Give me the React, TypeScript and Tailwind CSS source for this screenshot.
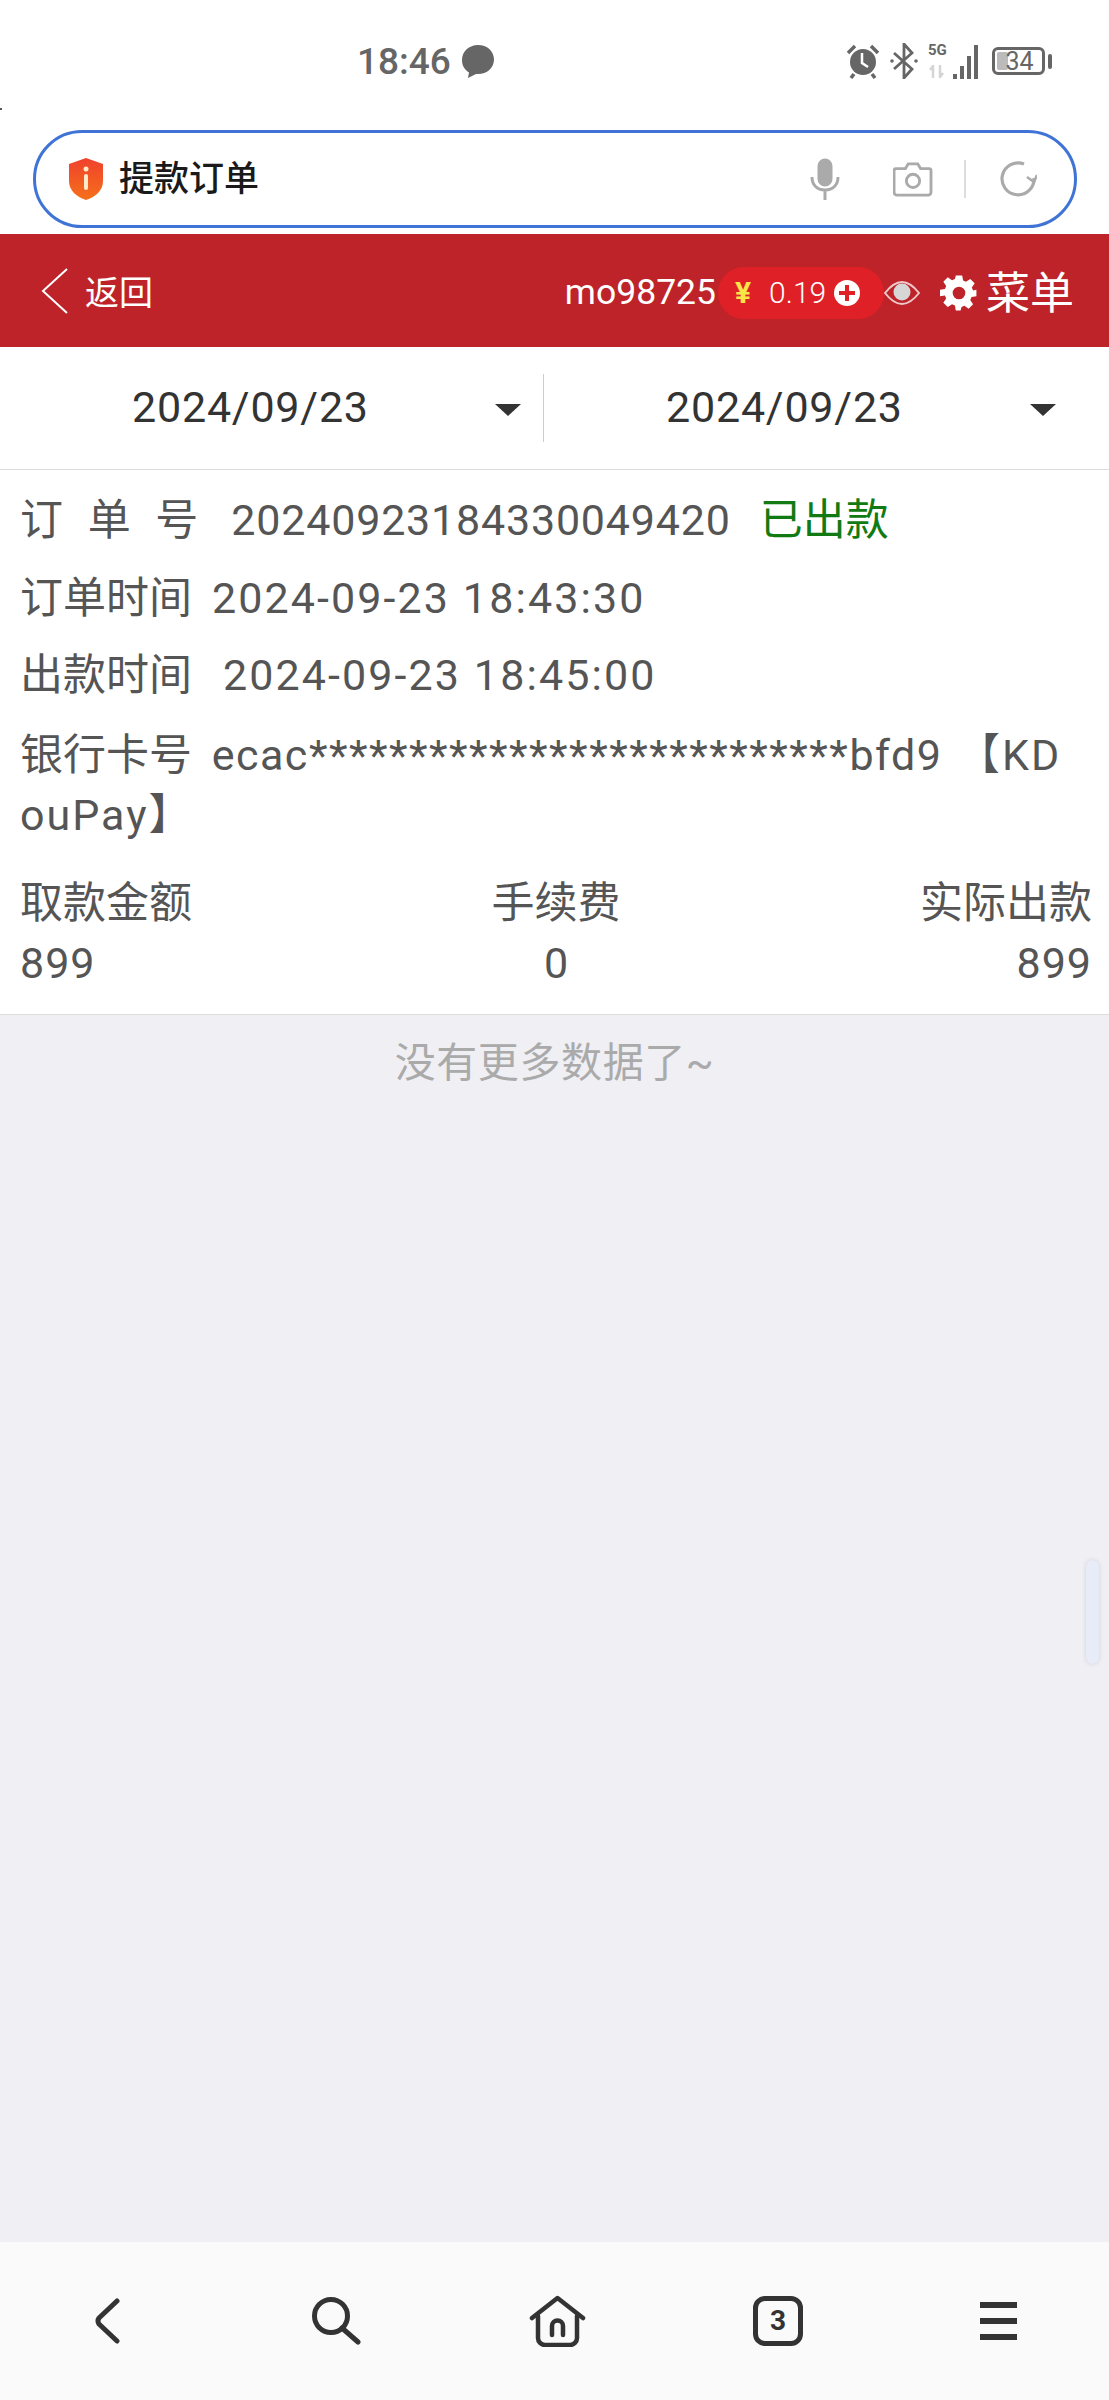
import React from "react";

const font = { fontFamily: '"Roboto","Noto Sans CJK SC",sans-serif' };

function StatusBar() {
  return (
    <div className="relative flex h-[130px] items-start justify-between bg-white">
      <i className="absolute left-0 top-[108px] h-[2px] w-[2px] bg-[#555]" />
      <div className="ml-[357px] mt-[41px] flex items-center gap-[11px] text-[#666]">
        <span className="text-[37px] font-medium leading-[42px] tracking-[0px]">18:46</span>
        <svg width="32" height="33" viewBox="0 0 32 33" className="-mt-[1px]">
          <path d="M16 0C7 0 0 6.500 0 15c0 6 3 10 7 12.500L6 33l8-4h2c9 0 16-6 16-14.500S25 0 16 0z" fill="#666" />
        </svg>
      </div>
      <div className="mr-[57px] mt-[43px] flex items-center text-[#666]">
        <svg width="34" height="36" viewBox="0 0 34 36" fill="none">
          <circle cx="17" cy="19" r="13" fill="#666" />
          <path d="M16 10v10l6 4" stroke="#fff" strokeWidth="2.500" />
          <path d="M2 10l7-7M32 10l-7-7M8 31l-3 4M26 31l3 4" stroke="#666" strokeWidth="3.500" />
        </svg>
        <svg width="28" height="36" viewBox="0 0 28 36" fill="none" className="ml-[10px]">
          <path d="M4 10l18 16-8 9V1l8 9L4 26" stroke="#666" strokeWidth="2.800" />
          <circle cx="2" cy="18" r="1.800" fill="#666" />
          <circle cx="26" cy="18" r="1.800" fill="#666" />
        </svg>
        <div className="relative ml-[10px] h-[36px] w-[50px]">
          <span className="absolute left-0 top-[0px] text-[15px] font-bold leading-[15px]">5G</span>
          <svg width="16" height="13" viewBox="0 0 16 13" fill="none" stroke="#d5d5d5" strokeWidth="2.500" className="absolute left-[1px] top-[22px]">
            <path d="M4 13V1L1 5M11 0v12l3-4" />
          </svg>
          <div className="absolute bottom-0 right-0 flex items-end gap-[3px]">
            <i className="h-[5px] w-[4px] bg-[#666]" />
            <i className="h-[13px] w-[4px] bg-[#666]" />
            <i className="h-[23px] w-[4px] bg-[#666]" />
            <i className="h-[34px] w-[4px] bg-[#666]" />
          </div>
        </div>
        <div className="relative ml-[14px] flex h-[28px] w-[53px] items-center justify-center rounded-[6px] border-[3px] border-[#666]">
          <div className="absolute left-[2px] top-[2px] h-[18px] w-[11px] rounded-[2px] bg-[#bbb]" />
          <span className="relative pl-[2px] text-[25px] leading-none">34</span>
        </div>
        <div className="ml-[3px] h-[15px] w-[4px] rounded-sm bg-[#666]" />
      </div>
    </div>
  );
}

function AddressBar() {
  return (
    <div className="flex h-[104px] items-start bg-white pl-[33px] pr-[32px]">
      <div className="flex h-[98px] w-full items-center rounded-[49px] border-[3px] border-[#3f74d6] pl-[32px]">
        <svg width="36" height="42" viewBox="0 0 36 42">
          <defs>
            <linearGradient id="sh" x1="0" y1="0" x2="0" y2="1">
              <stop offset="0" stopColor="#f0412d" />
              <stop offset="1" stopColor="#f5701a" />
            </linearGradient>
          </defs>
          <path d="M18 0l17 6v17c0 10-8 16-17 19C9 39 1 33 1 23V6z" fill="url(#sh)" />
          <circle cx="18" cy="11" r="2.500" fill="#ffe9c8" />
          <rect x="16" y="16" width="4" height="16" rx="2" fill="#ffe9c8" />
        </svg>
        <span className="ml-[15px] mt-[1px] text-[35px] font-medium leading-none text-[#1a1a1a]">提款订单</span>
        <div className="ml-auto mr-[37px] flex items-center">
          <svg width="30" height="42" viewBox="0 0 30 42" fill="none" stroke="#aaa" strokeWidth="3">
            <rect x="9" y="2" width="12" height="25" rx="6" fill="#aaa" />
            <path d="M2 19c0 8 5 13 13 13s13-5 13-13M15 32v10" />
          </svg>
          <svg width="40" height="36" viewBox="0 0 42 38" fill="none" stroke="#aaa" strokeWidth="3" className="ml-[53px]">
            <path d="M4 8h9l3-5h10l3 5h9a2 2 0 012 2v23a3 3 0 01-3 3H4a3 3 0 01-3-3V10a2 2 0 012-2z" />
            <circle cx="21" cy="21" r="7" />
          </svg>
          <div className="ml-[31px] h-[38px] w-[2px] bg-[#ddd]" />
          <svg width="38" height="38" viewBox="0 0 38 38" fill="none" stroke="#aaa" strokeWidth="3.200" className="ml-[33px]">
            <path d="M25 4a16 16 0 10 10 14" />
            <path d="M28 17l7 5 3-7" strokeWidth="2.500" />
          </svg>
        </div>
      </div>
    </div>
  );
}

function Header() {
  return (
    <div className="flex h-[113px] items-center bg-[#be232a] pt-[4px] text-white">
      <svg width="30" height="48" viewBox="0 0 30 48" fill="none" stroke="#fff" strokeWidth="2" className="-mt-[4px] ml-[40px]">
        <path d="M27 2L3 24l24 22" />
      </svg>
      <span className="ml-[15px] text-[34px] leading-none">返回</span>
      <div className="ml-auto flex items-center">
        <span className="mt-[1px] text-[35.500px] leading-none">mo98725</span>
        <div className="ml-[2px] flex h-[52px] w-[166px] items-center rounded-[26px] bg-[#e02027] pl-[17px]">
          <span className="text-[30px] font-bold leading-none text-[#f9e547]">¥</span>
          <span className="ml-[18px] text-[30px] font-light leading-none">0.19</span>
          <div className="relative ml-[8px] h-[26px] w-[26px] rounded-full bg-white">
            <i className="absolute left-[5px] top-[11px] h-[4px] w-[16px] bg-[#e02027]" />
            <i className="absolute left-[11px] top-[5px] h-[16px] w-[4px] bg-[#e02027]" />
          </div>
        </div>
        <svg width="36" height="24" viewBox="0 0 36 24" fill="none">
          <path d="M1 12C8 3 13 1 18 1s10 2 17 11c-7 9-12 11-17 11S8 21 1 12z" stroke="#eec9c9" strokeWidth="2" />
          <circle cx="18" cy="11" r="8.500" fill="#d6d6d6" />
        </svg>
        <svg width="38" height="38" viewBox="0 0 24 24" className="ml-[20px]">
          <path
            fill="#fff"
            fillRule="evenodd"
            d="M10 1h4l.6 3.100 1.800.8 2.700-1.800 2.800 2.800-1.800 2.700.8 1.800L23 10v4l-3.100.6-.8 1.800 1.800 2.700-2.800 2.800-2.700-1.800-1.800.8L13 23h-3l-.6-3.100-1.800-.8-2.700 1.800-2.800-2.800 1.800-2.700-.8-1.800L0 14v-4l3.100-.6.8-1.800L2.100 4.900l2.800-2.800 2.700 1.800 1.800-.8zM12 8a4 4 0 100 8 4 4 0 000-8z"
          />
        </svg>
        <span className="ml-[8px] mr-[35px] mt-[3px] text-[44px] leading-none">菜单</span>
      </div>
    </div>
  );
}

function DateSelect({ w, pad, tri }: { w: string; pad: string; tri: string }) {
  return (
    <div className={`relative flex h-[68px] items-center ${w} ${pad}`}>
      <span className="-mt-[2px] text-[43px] leading-none tracking-[0.8px] text-[#333]">2024/09/23</span>
      <i className={`absolute top-[30px] h-0 w-0 border-x-[13px] border-t-[12px] border-x-transparent border-t-[#333] ${tri}`} />
    </div>
  );
}

function Card() {
  return (
    <div className="h-[545px] border-b-[1px] border-[#ddd] bg-white pl-[20px] pr-[17px] pt-[20px] text-[43px] text-[#555]">
      <div className="flex h-[60px] items-center whitespace-pre leading-none">
        <span className="[word-spacing:14px]">订 单 号</span>
        <span className="ml-[33px] tracking-[0.8px]">20240923184330049420</span>
        <span className="ml-[29px] text-[#127a12]">已出款</span>
      </div>
      <div className="mt-[18px] flex h-[60px] items-center leading-none">
        <span>订单时间</span>
        <span className="ml-[20px] tracking-[2.100px]">2024-09-23 18:43:30</span>
      </div>
      <div className="mt-[17px] flex h-[60px] items-center leading-none">
        <span>出款时间</span>
        <span className="ml-[31px] tracking-[2.100px]">2024-09-23 18:45:00</span>
      </div>
      <div className="mt-[20px] break-all pr-[24px] leading-[60px]">
        <span>银行卡号</span> <span className="ml-[9px] tracking-[1.500px]">ecac***************************bfd9</span>{" "}
        <span className="ml-[4px] tracking-[2px]">【KDouPay】</span>
      </div>
      <div className="mt-[28px] flex justify-between leading-[60px]">
        <div>
          <div>取款金额</div>
          <div className="tracking-[1px]">899</div>
        </div>
        <div className="text-center">
          <div>手续费</div>
          <div>0</div>
        </div>
        <div className="text-right">
          <div>实际出款</div>
          <div className="tracking-[1px]">899</div>
        </div>
      </div>
    </div>
  );
}

function BottomNav() {
  return (
    <div className="flex h-[158px] items-center bg-[#fafafa] pl-[95px]">
      <svg width="25" height="46" viewBox="0 0 25 46" fill="none" stroke="#333" strokeWidth="5" strokeLinecap="round" strokeLinejoin="round">
        <path d="M22 3L4 20q-2 3 0 6l18 17" />
      </svg>
      <svg width="50" height="48" viewBox="0 0 50 48" fill="none" stroke="#333" strokeWidth="5" strokeLinecap="round" className="ml-[191px]">
        <circle cx="20" cy="19" r="16.500" />
        <path d="M31 31l16 14" />
      </svg>
      <svg width="57" height="52" viewBox="0 0 57 52" fill="none" stroke="#333" strokeWidth="4.500" strokeLinecap="round" strokeLinejoin="round" className="ml-[168px]">
        <path d="M3 23L28.500 3 54 23" />
        <path d="M9 21v22a7 7 0 007 7h25a7 7 0 007-7V21" />
        <path d="M23 40V31a5.500 5.500 0 0111 0v9" />
      </svg>
      <div className="ml-[167px] flex h-[50px] w-[50px] items-center justify-center rounded-[12px] border-[5px] border-[#333] text-[28px] font-bold leading-none text-[#333]">
        3
      </div>
      <div className="ml-[177px] flex h-[38px] w-[37px] flex-col justify-between">
        <i className="h-[6px] bg-[#333]" />
        <i className="h-[6px] bg-[#333]" />
        <i className="h-[6px] bg-[#333]" />
      </div>
    </div>
  );
}

export default function App() {
  return (
    <div className="flex h-[2400px] w-full flex-col overflow-hidden bg-[#efeff4]" style={font}>
      <StatusBar />
      <AddressBar />
      <Header />
      <div className="flex h-[123px] items-center border-b-[1px] border-[#ddd] bg-white">
        <DateSelect w="w-[543px]" pad="pl-[132px]" tri="right-[22px]" />
        <div className="h-[68px] w-[1px] bg-[#ccc]" />
        <DateSelect w="flex-1" pad="pl-[122px]" tri="right-[53px]" />
      </div>
      <Card />
      <div className="relative flex-1">
        <div className="mt-[25px] text-center text-[41px] leading-[46px] tracking-[0.6px] text-[#aaa]">没有更多数据了~</div>
        <div className="absolute right-[10px] top-[545px] h-[104px] w-[13px] rounded-full bg-[#e8ebf8] shadow-[0_0_5px_rgba(0,0,0,0.12)]" />
      </div>
      <BottomNav />
    </div>
  );
}
